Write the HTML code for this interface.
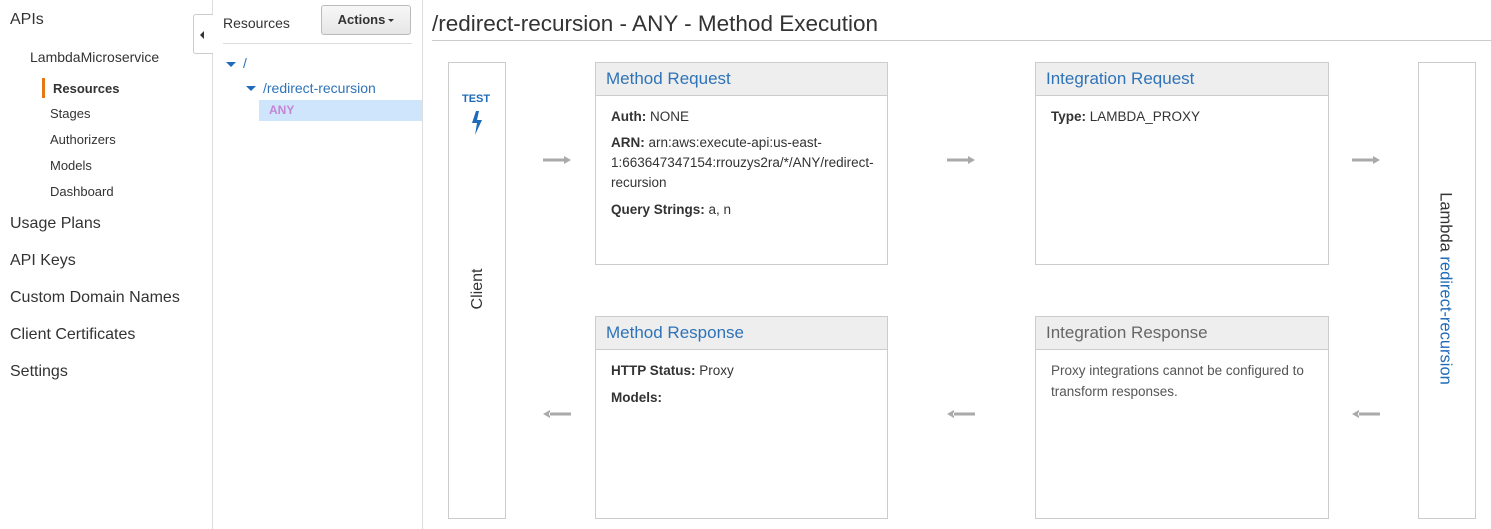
<!DOCTYPE html>
<html><head><meta charset="utf-8"><style>
*{margin:0;padding:0;box-sizing:border-box}
body{width:1491px;height:529px;position:relative;background:#fff;font-family:"Liberation Sans",Arial,sans-serif;color:#333;overflow:hidden}
.a{position:absolute;white-space:nowrap}
.box{position:absolute;border:1px solid #ccc;background:#fff}
.hd{height:33px;background:#eee;border-bottom:1px solid #ccc;font-size:17px;color:#2e73b8;padding:6px 0 0 10px}
.bd{padding:10px 15px;font-size:13.5px;line-height:21px;color:#333}
.bd p{margin-bottom:6px}
.arr{position:absolute;width:28px;height:10px}
</style></head><body>
<div class="a" style="left:10px;top:11px;font-size:16px">APIs</div>
<div class="a" style="left:30px;top:49px;font-size:14px">LambdaMicroservice</div>
<div class="a" style="left:42px;top:78px;width:3px;height:20px;background:#e47911"></div>
<div class="a" style="left:53px;top:81px;font-size:13px;font-weight:bold">Resources</div>
<div class="a" style="left:50px;top:106px;font-size:13px">Stages</div>
<div class="a" style="left:50px;top:132px;font-size:13px">Authorizers</div>
<div class="a" style="left:50px;top:158px;font-size:13px">Models</div>
<div class="a" style="left:50px;top:184px;font-size:13px">Dashboard</div>
<div class="a" style="left:10px;top:215px;font-size:16px">Usage Plans</div>
<div class="a" style="left:10px;top:252px;font-size:16px">API Keys</div>
<div class="a" style="left:10px;top:289px;font-size:16px">Custom Domain Names</div>
<div class="a" style="left:10px;top:326px;font-size:16px">Client Certificates</div>
<div class="a" style="left:10px;top:363px;font-size:16px">Settings</div>
<div class="a" style="left:212px;top:0;width:1px;height:529px;background:#ddd"></div>
<div class="a" style="left:193px;top:14px;width:20px;height:40px;border:1px solid #ccc;border-right:none;border-radius:3px 0 0 3px;background:#fff"></div>
<div class="a" style="left:200px;top:31px;width:0;height:0;border-top:4px solid transparent;border-bottom:4px solid transparent;border-right:4px solid #333"></div>
<div class="a" style="left:422px;top:0;width:1px;height:529px;background:#ddd"></div>
<div class="a" style="left:223px;top:15px;font-size:14px">Resources</div>
<div class="a" style="left:321px;top:5px;width:90px;height:30px;border:1px solid #bbb;border-radius:3px;background:linear-gradient(#f7f7f7,#e6e6e6);font-size:13px;font-weight:bold;text-align:center;line-height:28px">Actions<span style="display:inline-block;margin-left:3px;vertical-align:middle;border-left:3.5px solid transparent;border-right:3.5px solid transparent;border-top:3.5px solid #333"></span></div>
<div class="a" style="left:223px;top:43px;width:189px;height:1px;background:#ddd"></div>
<div class="a" style="left:226px;top:62px;border-left:5px solid transparent;border-right:5px solid transparent;border-top:5px solid #1f6bb8"></div>
<div class="a" style="left:243px;top:55px;font-size:14px;color:#2e73b8">/</div>
<div class="a" style="left:246px;top:86px;border-left:5px solid transparent;border-right:5px solid transparent;border-top:5px solid #1f6bb8"></div>
<div class="a" style="left:263px;top:80px;font-size:14px;color:#2e73b8">/redirect-recursion</div>
<div class="a" style="left:259px;top:100px;width:163px;height:21px;background:#cfe5fb"></div>
<div class="a" style="left:269px;top:103px;font-size:12px;font-weight:bold;color:#c584d6">ANY</div>
<div class="a" style="left:432px;top:11px;font-size:22.5px;color:#333">/redirect-recursion - ANY - Method Execution</div>
<div class="a" style="left:432px;top:40px;width:1059px;height:1px;background:#ccc"></div>

<div class="box" style="left:448px;top:62px;width:58px;height:457px"></div>
<div class="a" style="left:462px;top:93px;font-size:11px;font-weight:bold;color:#1f6bb8">TEST</div>
<svg class="a" style="left:470px;top:111px" width="14" height="24" viewBox="0 0 14 24"><path d="M6 0 L2 12 L7 12 L5 24 L12 9 L7 9 L9 0Z" fill="#1f6bb8"/></svg>
<div class="a" style="left:449px;top:280px;width:58px;text-align:center;font-size:16px;transform:rotate(-90deg)">Client</div>

<div class="box" style="left:1418px;top:62px;width:58px;height:457px"></div>
<div class="a" style="left:1345px;top:279px;width:200px;text-align:center;font-size:16.5px;transform:rotate(90deg)">Lambda <span style="color:#1f6bb8">redirect-recursion</span></div>

<div class="box" style="left:595px;top:62px;width:293px;height:203px"><div class="hd">Method Request</div><div class="bd"><p><b>Auth:</b> NONE</p><p style="line-height:20px"><b>ARN:</b> arn:aws:execute-api:us-east-1:663647347154:rrouzys2ra/*/ANY/redirect-recursion</p><p><b>Query Strings:</b> a, n</p></div></div>
<div class="box" style="left:1035px;top:62px;width:294px;height:203px"><div class="hd">Integration Request</div><div class="bd"><p><b>Type:</b> LAMBDA_PROXY</p></div></div>
<div class="box" style="left:595px;top:316px;width:293px;height:203px"><div class="hd">Method Response</div><div class="bd"><p><b>HTTP Status:</b> Proxy</p><p><b>Models:</b></p></div></div>
<div class="box" style="left:1035px;top:316px;width:294px;height:203px"><div class="hd" style="color:#666">Integration Response</div><div class="bd" style="color:#555;font-size:13.5px"><p>Proxy integrations cannot be configured to transform responses.</p></div></div>

<svg class="arr" style="left:543px;top:155px" viewBox="0 0 28 10"><path d="M0 3.5h22v3H0z M21 1l7 4-7 4z" fill="#aaa"/></svg>
<svg class="arr" style="left:947px;top:155px" viewBox="0 0 28 10"><path d="M0 3.5h22v3H0z M21 1l7 4-7 4z" fill="#aaa"/></svg>
<svg class="arr" style="left:1352px;top:155px" viewBox="0 0 28 10"><path d="M0 3.5h22v3H0z M21 1l7 4-7 4z" fill="#aaa"/></svg>
<svg class="arr" style="left:543px;top:409px" viewBox="0 0 28 10"><path d="M6 3.5h22v3H6z M7 1L0 5l7 4z" fill="#aaa"/></svg>
<svg class="arr" style="left:947px;top:409px" viewBox="0 0 28 10"><path d="M6 3.5h22v3H6z M7 1L0 5l7 4z" fill="#aaa"/></svg>
<svg class="arr" style="left:1352px;top:409px" viewBox="0 0 28 10"><path d="M6 3.5h22v3H6z M7 1L0 5l7 4z" fill="#aaa"/></svg>
</body></html>
